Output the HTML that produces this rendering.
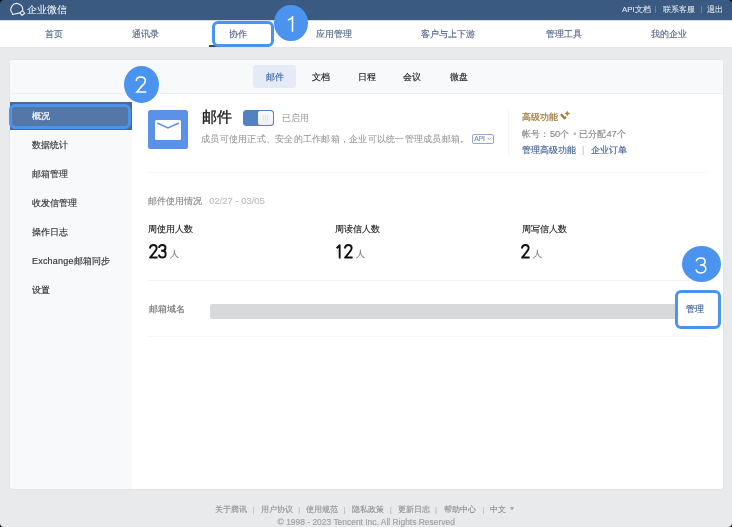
<!DOCTYPE html>
<html><head><meta charset="utf-8">
<style>
*{margin:0;padding:0;box-sizing:border-box}
html,body{width:732px;height:527px;overflow:hidden}
body{position:relative;-webkit-font-smoothing:antialiased;background:#e9eaec;font-family:"Liberation Sans",sans-serif;color:#333}
.a{position:absolute;white-space:nowrap;-webkit-text-stroke:0.15px currentColor}
#top{left:0;top:0;width:732px;height:20px;background:#3b5a82}
#nav{left:0;top:20px;width:732px;height:27px;background:#fff;border-top:1px solid #d5dbe4}
.nv{top:28px;font-size:9px;color:#55698b;line-height:12px}
#card{left:10.4px;top:59.8px;width:712.8px;height:429.6px;background:#fff;border-radius:3px;overflow:hidden;box-shadow:0 0 0 0.5px rgba(0,0,0,0.05)}
#tabs{left:0;top:0;width:712.8px;height:34px;background:#f8f9fb;border-bottom:1px solid #eceef1}
.tb{top:70.5px;font-size:9px;line-height:12px;color:#222}
#side{left:0;top:34px;width:121.7px;height:396px;background:#f8f9fb}
.si{left:32px;font-size:9px;line-height:12px;color:#333}
.circ{border-radius:50%;background:#4a94f0}
.box{border:3px solid #4a94f0;border-radius:6px}
.hl{height:1px;background:#f0f1f3}
.num{font-size:20px;line-height:24px;color:#111;transform:scaleX(0.9);transform-origin:0 0;-webkit-text-stroke:0.4px #111}
.ren{top:247.5px;font-size:9px;line-height:12px;color:#777}
.ft{top:504.5px;font-size:7.9px;line-height:10px}
.tr{top:4px;font-size:7.8px;line-height:11px;color:#e4e9f0;-webkit-text-stroke:0.05px}
.g9{font-size:9px;line-height:12px}
.dg{fill:none;stroke:#fff;stroke-width:1.55;stroke-linecap:butt;stroke-linejoin:miter}
</style></head><body>
<div id="root" style="position:absolute;left:0;top:0;width:732px;height:527px;will-change:transform">
<div class="a" id="top"></div>
<svg class="a" style="left:0;top:0" width="40" height="20" viewBox="0 0 40 20">
<path d="M12.63 13.67 A5.9 5.9 0 1 1 22.5 11.03" fill="none" stroke="#e9eef5" stroke-width="1.1"/>
<path d="M12.7 13.6 L12.3 14.5 L19.8 12.9" fill="none" stroke="#e9eef5" stroke-width="1.1" stroke-linejoin="round"/>
<path d="M22.4 10.5 L24.7 13.1 L22.1 15.4 L19.8 12.8 Z" fill="none" stroke="#e9eef5" stroke-width="1.1"/>
</svg>
<div class="a" style="left:27px;top:2.8px;font-size:9.5px;line-height:13px;color:#f4f6f9;-webkit-text-stroke:0.05px">企业微信</div>
<div class="a tr" style="left:622px">API文档</div>
<div class="a" style="left:655px;top:6px;width:0.6px;height:7px;background:rgba(255,255,255,0.25)"></div>
<div class="a tr" style="left:663px">联系客服</div>
<div class="a" style="left:701px;top:6px;width:0.6px;height:7px;background:rgba(255,255,255,0.25)"></div>
<div class="a tr" style="left:707px">退出</div>

<div class="a" id="nav"></div><div class="a" style="left:0;top:47px;width:732px;height:1px;background:#e3e4e6"></div>
<div class="a nv" style="left:44.9px">首页</div>
<div class="a nv" style="left:132.1px">通讯录</div>
<div class="a" style="left:209px;top:45px;width:60px;height:2px;background:#2e4a74"></div>
<div class="a box" style="left:212px;top:21px;width:61.9px;height:26px;background:#fff"></div>
<div class="a nv" style="left:228.7px">协作</div>
<div class="a nv" style="left:315.5px">应用管理</div>
<div class="a nv" style="left:421.2px">客户与上下游</div>
<div class="a nv" style="left:545.5px">管理工具</div>
<div class="a nv" style="left:651.4px">我的企业</div>
<div class="a circ" style="left:274.3px;top:5.1px;width:33.3px;height:35.5px"></div>
<svg class="a" style="left:287px;top:15.8px" width="12" height="18" viewBox="0 0 12 18"><path class="dg" d="M0.9 4.1 C2.7 3.5 4.5 2.5 5.5 1.1 L5.5 15.7"/></svg>

<div class="a" id="card">
  <div class="a" id="tabs"></div>
  <div class="a" id="side"></div><div class="a" style="left:121.3px;top:34px;width:0.8px;height:396px;background:repeating-linear-gradient(#eceef1 0 1px,transparent 1px 2px)"></div>
</div>
<div class="a" style="left:253px;top:65px;width:43px;height:23px;background:#e4ebf6;border-radius:3px"></div>
<div class="a tb" style="left:265.5px;color:#3a66a8">邮件</div>
<div class="a tb" style="left:311.5px">文档</div>
<div class="a tb" style="left:357.5px">日程</div>
<div class="a tb" style="left:403px">会议</div>
<div class="a tb" style="left:449.5px">微盘</div>

<div class="a" style="left:10.4px;top:101.7px;width:121.7px;height:28.4px;background:#4b6897"></div>
<div class="a box" style="left:8.9px;top:104px;width:122.5px;height:24.8px;background:#5577a8"></div>
<div class="a si" style="top:110px;color:#fff">概况</div>
<div class="a si" style="top:139px">数据统计</div>
<div class="a si" style="top:168px">邮箱管理</div>
<div class="a si" style="top:197px">收发信管理</div>
<div class="a si" style="top:226px">操作日志</div>
<div class="a si" style="top:255px"><span style="letter-spacing:0.2px">Exchange</span>邮箱同步</div>
<div class="a si" style="top:284px">设置</div>
<div class="a circ" style="left:123.9px;top:66.1px;width:34.7px;height:37.3px"></div>
<svg class="a" style="left:134.7px;top:76.3px" width="13" height="18" viewBox="0 0 13 18"><path class="dg" d="M1.3 5 C1.3 2.5 3.1 1.1 5.8 1.1 C8.5 1.1 10.3 2.7 10.3 4.9 C10.3 6.9 9 8.2 7 9.9 L1.9 15.9 L11.3 15.9"/></svg>

<!-- header -->
<div class="a" style="left:148.3px;top:109.8px;width:39.5px;height:39px;background:#5b92e8;border-radius:2.5px"></div>
<svg class="a" style="left:155px;top:120px" width="26" height="20" viewBox="0 0 26 20">
<rect x="0" y="0" width="26" height="20" rx="1.5" fill="#fff"/>
<path d="M2.8 3.2 L13 7.9 L23.4 3.2" fill="none" stroke="#5b92e8" stroke-width="1.5" stroke-linecap="round"/>
</svg>
<div class="a" style="left:201.5px;top:107.8px;font-size:15.2px;line-height:18px;color:#222;-webkit-text-stroke:0.4px #222">邮件</div>
<div class="a" style="left:243px;top:110px;width:31px;height:15.5px;border:1px solid #5282c4;border-radius:3px;background:#5282c4;overflow:hidden">
  <div class="a" style="left:13.5px;top:0;width:15.5px;height:13.5px;background:linear-gradient(#fbfbfd,#eceef6);border-radius:2px"></div>
  <div class="a" style="left:19px;top:4px;width:0.8px;height:6px;background:#e4e6ee"></div>
  <div class="a" style="left:21px;top:4px;width:0.8px;height:6px;background:#e4e6ee"></div>
  <div class="a" style="left:23px;top:4px;width:0.8px;height:6px;background:#e4e6ee"></div>
</div>
<div class="a g9" style="left:282px;top:112px;color:#9c9c9c;-webkit-text-stroke:0.05px">已启用</div>
<div class="a g9" style="left:201px;top:133px;color:#939393;letter-spacing:0.25px;-webkit-text-stroke:0.05px">成员可使用正式、安全的工作邮箱，企业可以统一管理成员邮箱。</div>
<div class="a" style="left:471.5px;top:134px;width:22.5px;height:9.5px;border:1px solid #8ea8d2;border-radius:2px"></div>
<div class="a" style="left:474.3px;top:134.6px;font-size:6.6px;line-height:8px;color:#6a8cc2">API</div>
<svg class="a" style="left:486.5px;top:137px" width="5" height="4" viewBox="0 0 5 4"><path d="M0.6 0.8 L2.3 2.6 L4 0.8" fill="none" stroke="#6a8cc2" stroke-width="0.8"/></svg>
<div class="a" style="left:508px;top:110px;width:1px;height:46px;background:repeating-linear-gradient(#ececec 0 1px,transparent 1px 2px)"></div>
<div class="a g9" style="left:521.5px;top:111px;color:#a27b3d;font-size:9.2px;-webkit-text-stroke:0.25px #a27b3d">高级功能</div>
<svg class="a" style="left:555px;top:108px" width="20" height="16" viewBox="555 108 20 16">
<path d="M561.5 114.9 L564.5 118.3 L565.2 117.4" fill="none" stroke="#a8813f" stroke-width="2.4" stroke-linecap="round" stroke-linejoin="round"/>
<path d="M567.3 110.9 Q567.6 113.2 569.9 113.5 Q567.6 113.8 567.3 116.1 Q567 113.8 564.7 113.5 Q567 113.2 567.3 110.9 Z" fill="#a8813f" stroke="#a8813f" stroke-width="0.4"/>
</svg>
<div class="a g9" style="left:521.5px;top:128px;color:#888;font-size:9.2px">帐号：<span style="margin-left:1.5px">50个</span><span style="color:#9fc0ec;margin:0 3px 0 4px">•</span>已分配47个</div>
<div class="a g9" style="left:521.5px;top:144px;color:#3d5f95;font-size:9.2px">管理高级功能<span style="color:#c8c8c8;margin:0 6.5px 0 6.5px">|</span>企业订单</div>
<div class="a hl" style="left:148px;top:171.5px;width:559px;height:1.2px;background:#f5f6f7"></div>

<div class="a g9" style="left:148.2px;top:194.8px;color:#8a8a8a;font-size:9.25px">邮件使用情况</div><div class="a g9" style="left:209.2px;top:194.8px;color:#bdbdbd;font-size:9.45px">02/27 - 03/05</div>
<div class="a g9" style="left:148px;top:223px;color:#222">周使用人数</div>
<div class="a g9" style="left:334.5px;top:223px;color:#222">周读信人数</div>
<div class="a g9" style="left:521.5px;top:223px;color:#222">周写信人数</div>
<svg class="a" style="left:148.9px;top:244.3px" width="9.5" height="15" viewBox="0 0 9.5 15"><path d="M0.95 4.4 C0.95 2.1 2.5 0.95 4.3 0.95 C6.3 0.95 7.65 2.2 7.65 4.1 C7.65 5.6 6.9 6.6 5.6 8 L1.1 13.55 L8.6 13.55" fill="none" stroke="#111" stroke-width="1.9" stroke-linejoin="round"/></svg><svg class="a" style="left:158.1px;top:244.3px" width="9.5" height="15" viewBox="0 0 9.5 15"><path d="M0.9 3.9 C1.2 2.0 2.6 0.95 4.3 0.95 C6.2 0.95 7.5 2.1 7.5 3.8 C7.5 5.6 6.2 6.75 4.2 6.75 L3.2 6.75 M4.2 6.75 C6.5 6.75 7.65 8.1 7.65 10 C7.65 12.2 6.1 13.55 4.3 13.55 C2.4 13.55 1.1 12.4 0.85 10.6" fill="none" stroke="#111" stroke-width="1.9" stroke-linejoin="round"/></svg><div class="a ren" style="left:170px">人</div>
<svg class="a" style="left:335.8px;top:244.3px" width="5" height="15" viewBox="0 0 5 15"><path d="M0.6 4.2 L3.65 1.2 L3.65 14.5" fill="none" stroke="#111" stroke-width="1.9" stroke-linejoin="round"/></svg><svg class="a" style="left:344.3px;top:244.3px" width="9.5" height="15" viewBox="0 0 9.5 15"><path d="M0.95 4.4 C0.95 2.1 2.5 0.95 4.3 0.95 C6.3 0.95 7.65 2.2 7.65 4.1 C7.65 5.6 6.9 6.6 5.6 8 L1.1 13.55 L8.6 13.55" fill="none" stroke="#111" stroke-width="1.9" stroke-linejoin="round"/></svg><div class="a ren" style="left:356px">人</div>
<svg class="a" style="left:520.9px;top:244.3px" width="9.5" height="15" viewBox="0 0 9.5 15"><path d="M0.95 4.4 C0.95 2.1 2.5 0.95 4.3 0.95 C6.3 0.95 7.65 2.2 7.65 4.1 C7.65 5.6 6.9 6.6 5.6 8 L1.1 13.55 L8.6 13.55" fill="none" stroke="#111" stroke-width="1.9" stroke-linejoin="round"/></svg><div class="a ren" style="left:533px">人</div>
<div class="a hl" style="left:148px;top:280px;width:559px;background:#f1f2f4"></div>

<div class="a g9" style="left:148.5px;top:303px;color:#707070">邮箱域名</div>
<div class="a" style="left:210px;top:304px;width:470px;height:15px;background:#d8d9db;border-radius:2px"></div>
<div class="a hl" style="left:148px;top:336.2px;width:559px;height:1.2px;background:#f5f6f7"></div>
<div class="a box" style="left:674.9px;top:290.2px;width:46.1px;height:39.3px;background:#fff"></div>
<div class="a g9" style="left:686px;top:303px;color:#3d5f95">管理</div>
<div class="a circ" style="left:682px;top:246.1px;width:38.9px;height:35.6px"></div>
<svg class="a" style="left:694.7px;top:256.6px" width="14" height="18" viewBox="0 0 14 18"><path class="dg" d="M1.3 4.3 C1.7 2.2 3.4 1.05 5.9 1.05 C8.5 1.05 10.1 2.5 10.1 4.5 C10.1 6.6 8.5 8 5.9 8 L4.9 8 M5.9 8 C8.8 8 10.8 9.5 10.8 11.8 C10.8 14.2 8.8 15.95 6 15.95 C3.3 15.95 1.4 14.6 1 12.4"/></svg>

<!-- footer -->
<div class="a ft" style="left:215.1px;color:#939393">关于腾讯</div><div class="a ft" style="left:252.6px;color:#bcbcbc">|</div><div class="a ft" style="left:260.8px;color:#939393">用户协议</div><div class="a ft" style="left:298.3px;color:#bcbcbc">|</div><div class="a ft" style="left:306.4px;color:#939393">使用规范</div><div class="a ft" style="left:343.6px;color:#bcbcbc">|</div><div class="a ft" style="left:352px;color:#939393">隐私政策</div><div class="a ft" style="left:389.8px;color:#bcbcbc">|</div><div class="a ft" style="left:397.9px;color:#939393">更新日志</div><div class="a ft" style="left:435.1px;color:#bcbcbc">|</div><div class="a ft" style="left:443.6px;color:#939393">帮助中心</div><div class="a ft" style="left:482.6px;color:#bcbcbc">|</div><div class="a ft" style="left:489.6px;color:#939393">中文</div><svg class="a" style="left:509.5px;top:506.5px" width="4" height="4" viewBox="0 0 4 4"><path d="M0 0.3 L4 0.3 L2 3.3 Z" fill="#999"/></svg>
<div class="a" style="left:277.6px;top:517.2px;font-size:8.45px;line-height:10px;color:#a0a0a0">© 1998 - 2023 Tencent Inc. All Rights Reserved</div>
<!-- window corners -->
<svg class="a" style="left:0;top:0" width="4" height="4"><path d="M0 0H4A4 4 0 0 0 0 4Z" fill="#000"/></svg>
<svg class="a" style="left:728px;top:0" width="4" height="4"><path d="M0 0H4V4A4 4 0 0 0 0 0Z" fill="#000"/></svg>
<svg class="a" style="left:0;top:523px" width="4" height="4"><path d="M0 0A4 4 0 0 0 4 4H0Z" fill="#000"/></svg>
<svg class="a" style="left:728px;top:523px" width="4" height="4"><path d="M4 0V4H0A4 4 0 0 0 4 0Z" fill="#000"/></svg>
</div>
</body></html>
